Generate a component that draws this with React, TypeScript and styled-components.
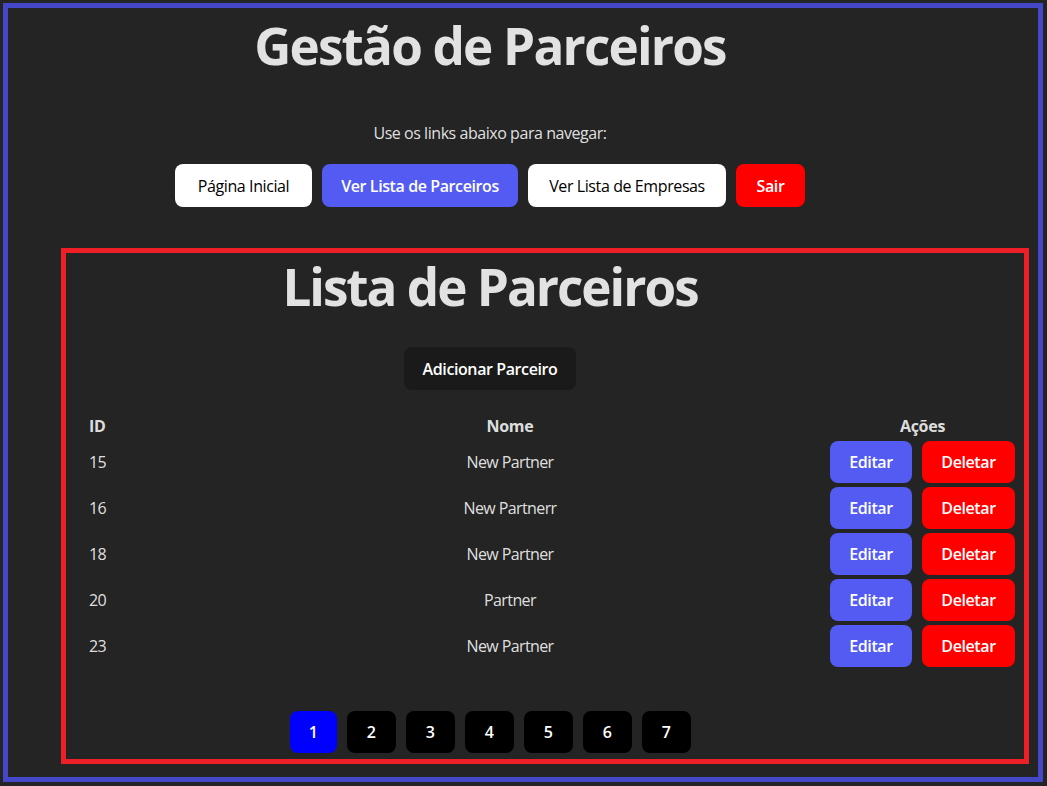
import React from "react";
import styled, { createGlobalStyle } from "styled-components";

const Global = createGlobalStyle`
  html, body { margin: 0; padding: 0; background: #242424; }
  body {
    font-family: "Open Sans", "Noto Sans", sans-serif;
    color: rgba(255, 255, 255, 0.87);
    -webkit-font-smoothing: antialiased;
  }
  * { box-sizing: border-box; }
`;

const Frame = styled.div`
  margin: 3px 4px 4px 3px;
  border: 5px solid #4547c9;
  display: flex;
  flex-direction: column;
  padding: 0 9px 13px 53px;
`;

const Centered = styled.div`
  display: flex;
  flex-direction: column;
  align-items: center;
  padding-right: 110px;
`;

const HeaderBlock = styled(Centered)`
  margin-left: -53px;
  padding-right: 57px;
`;

const Title = styled.h1<{ $top: number; $ls: number }>`
  margin: ${(p) => p.$top}px 0 0;
  font-size: 51.2px;
  line-height: 56px;
  font-weight: 700;
  letter-spacing: ${(p) => p.$ls}px;
  white-space: nowrap;
`;

const Lead = styled.p`
  margin: 48px 0 0;
  font-size: 16px;
  line-height: 24px;
  letter-spacing: -0.45px;
`;

const Nav = styled.nav`
  display: flex;
  gap: 10px;
  margin-top: 19px;
`;

const palette = {
  light: { bg: "#ffffff", fg: "#000000", weight: 400 },
  primary: { bg: "#535bf2", fg: "#ffffff", weight: 600 },
  danger: { bg: "#ff0000", fg: "#ffffff", weight: 600 },
  dark: { bg: "#1a1a1a", fg: "#ffffff", weight: 600 },
  black: { bg: "#000000", fg: "#ffffff", weight: 600 },
  active: { bg: "#0000ff", fg: "#ffffff", weight: 600 },
};

type Variant = keyof typeof palette;

const Button = styled.button<{ $variant: Variant; $h?: number; $w: number }>`
  width: ${(p) => p.$w}px;
  height: ${(p) => p.$h ?? 43}px;
  padding: 0;
  border: none;
  border-radius: 8px;
  font-family: inherit;
  font-size: 16px;
  line-height: 24px;
  letter-spacing: -0.4px;
  text-align: center;
  white-space: nowrap;
  cursor: pointer;
  background: ${(p) => palette[p.$variant].bg};
  color: ${(p) => palette[p.$variant].fg};
  font-weight: ${(p) => palette[p.$variant].weight};
`;

const Panel = styled.section`
  margin-top: 41px;
  border: 5px solid #ee1f27;
  display: flex;
  flex-direction: column;
  padding: 0 0 6px;
`;

const AddWrap = styled.div`
  margin-top: 33px;
`;

const Table = styled.div`
  margin: 23px 8px 0 21px;
  display: flex;
  flex-direction: column;
`;

const Row = styled.div<{ $head?: boolean }>`
  display: grid;
  grid-template-columns: 104px 1fr 187px;
  align-items: center;
  height: ${(p) => (p.$head ? 26 : 46)}px;
  font-size: 16px;
  line-height: 24px;
  letter-spacing: ${(p) => (p.$head ? -0.3 : -0.6)}px;
  font-weight: ${(p) => (p.$head ? 700 : 400)};
`;

const IdCell = styled.div`
  padding-left: 2px;
`;

const NameCell = styled.div`
  text-align: center;
`;

const Actions = styled.div`
  display: flex;
  justify-content: center;
  gap: 10px;
`;

const Pager = styled.div`
  display: flex;
  gap: 10px;
  margin-top: 42px;
`;

const partners = [
  { id: 15, name: "New Partner" },
  { id: 16, name: "New Partnerr" },
  { id: 18, name: "New Partner" },
  { id: 20, name: "Partner" },
  { id: 23, name: "New Partner" },
];

export default function App() {
  return (
    <>
      <Global />
      <Frame>
        <HeaderBlock>
          <Title $top={9} $ls={-1.8}>Gestão de Parceiros</Title>
          <Lead>Use os links abaixo para navegar:</Lead>
          <Nav>
            <Button $variant="light" $w={137}>Página Inicial</Button>
            <Button $variant="primary" $w={196}>Ver Lista de Parceiros</Button>
            <Button $variant="light" $w={198}>Ver Lista de Empresas</Button>
            <Button $variant="danger" $w={69}>Sair</Button>
          </Nav>
        </HeaderBlock>
        <Panel>
          <Centered>
            <Title as="h2" $top={5} $ls={-2}>Lista de Parceiros</Title>
            <AddWrap>
              <Button $variant="dark" $w={172}>Adicionar Parceiro</Button>
            </AddWrap>
          </Centered>
          <Table>
            <Row $head>
              <IdCell>ID</IdCell>
              <NameCell>Nome</NameCell>
              <NameCell>Ações</NameCell>
            </Row>
            {partners.map((p) => (
              <Row key={p.id}>
                <IdCell>{p.id}</IdCell>
                <NameCell>{p.name}</NameCell>
                <Actions>
                  <Button $variant="primary" $h={42} $w={82}>Editar</Button>
                  <Button $variant="danger" $h={42} $w={93}>Deletar</Button>
                </Actions>
              </Row>
            ))}
          </Table>
          <Centered>
            <Pager>
              {[1, 2, 3, 4, 5, 6, 7].map((n) => (
                <Button
                  key={n}
                  $variant={n === 1 ? "active" : "black"}
                  $h={42}
                  $w={n === 1 ? 47 : 49}
                >
                  {n}
                </Button>
              ))}
            </Pager>
          </Centered>
        </Panel>
      </Frame>
    </>
  );
}
